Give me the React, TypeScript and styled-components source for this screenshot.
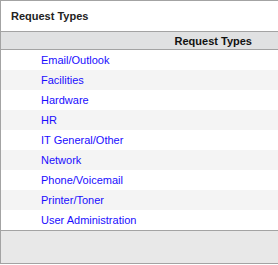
import styled, { createGlobalStyle } from "styled-components";

const requestTypes = [
  "Email/Outlook",
  "Facilities",
  "Hardware",
  "HR",
  "IT General/Other",
  "Network",
  "Phone/Voicemail",
  "Printer/Toner",
  "User Administration",
];

const GlobalStyle = createGlobalStyle`
  html, body {
    margin: 0;
    padding: 0;
    background: #ffffff;
    font-family: "Liberation Sans", Arial, sans-serif;
  }
`;

function App() {
  return (
    <>
      <GlobalStyle />
      <Panel>
        <PanelTitle>Request Types</PanelTitle>
        <HeaderRow>Request Types</HeaderRow>
        <List>
          {requestTypes.map((name, i) => (
            <Row key={name} striped={i % 2 === 1}>
              <RowLink href="#">{name}</RowLink>
            </Row>
          ))}
        </List>
        <Footer />
      </Panel>
    </>
  );
}

const Panel = styled.div`
  width: 278px;
  box-sizing: border-box;
  border-top: 1px solid #a3a3a3;
  border-left: 1px solid #a3a3a3;
  border-bottom: 1px solid #a3a3a3;
  display: flex;
  flex-direction: column;
`;

const PanelTitle = styled.div`
  height: 30px;
  display: flex;
  align-items: center;
  padding-left: 10px;
  font-size: 11px;
  font-weight: bold;
  color: #222222;
`;

const HeaderRow = styled.div`
  height: 17px;
  display: flex;
  align-items: center;
  justify-content: flex-end;
  padding-right: 26px;
  background: #e0e1e2;
  border-top: 1px solid #a3a3a3;
  border-bottom: 1px solid #a3a3a3;
  font-size: 11px;
  font-weight: bold;
  color: #111111;
`;

const List = styled.div`
  display: flex;
  flex-direction: column;
`;

const Row = styled.div<{ striped: boolean }>`
  height: 20px;
  display: flex;
  align-items: center;
  padding-left: 40px;
  background: ${(props) => (props.striped ? "#f4f4f4" : "#ffffff")};
`;

const RowLink = styled.a`
  font-size: 11px;
  color: #1a0dff;
  text-decoration: none;
`;

const Footer = styled.div`
  height: 32px;
  background: #e8e8e8;
  border-top: 1px solid #a3a3a3;
`;

export default App;
